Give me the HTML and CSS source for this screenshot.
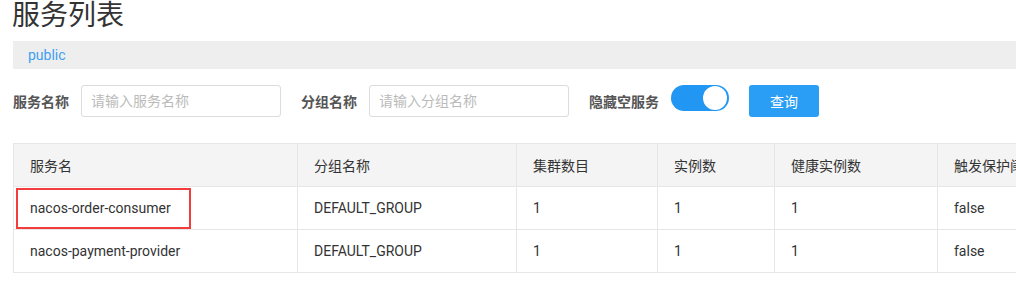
FILE: index.html
```html
<!DOCTYPE html>
<html lang="zh-CN">
<head>
    <meta charset="UTF-8">
    <title>服务列表</title>
    <link rel="stylesheet" href="styles.css">
</head>
<body>
    <div class="page">
        <h1 class="title">服务列表</h1>
        <div class="crumb"><span class="ns">public</span></div>
        <div class="filters">
            <label class="lbl">服务名称</label>
            <input class="txt" type="text" placeholder="请输入服务名称">
            <label class="lbl">分组名称</label>
            <input class="txt" type="text" placeholder="请输入分组名称">
            <label class="lbl">隐藏空服务</label>
            <span class="switch"><span class="knob"></span></span>
            <button class="btn">查询</button>
        </div>
        <table class="grid">
            <thead>
                <tr>
                    <th class="c1">服务名</th>
                    <th class="c2">分组名称</th>
                    <th class="c3">集群数目</th>
                    <th class="c4">实例数</th>
                    <th class="c5">健康实例数</th>
                    <th class="c6">触发保护阈值</th>
                </tr>
            </thead>
            <tbody>
                <tr>
                    <td><span class="mark">nacos-order-consumer</span></td>
                    <td>DEFAULT_GROUP</td>
                    <td>1</td>
                    <td>1</td>
                    <td>1</td>
                    <td>false</td>
                </tr>
                <tr>
                    <td>nacos-payment-provider</td>
                    <td>DEFAULT_GROUP</td>
                    <td>1</td>
                    <td>1</td>
                    <td>1</td>
                    <td>false</td>
                </tr>
            </tbody>
        </table>
    </div>
</body>
</html>
```

FILE: styles.css
```css
html, body { margin: 0; padding: 0; background: #fff; overflow: hidden; }
body { font-family: Roboto, "Noto Sans CJK SC", sans-serif; color: #333; font-size: 14px; }
.page { padding-left: 13px; width: 1200px; }
.title { margin: 0 0 9px -1px; font-size: 28px; font-weight: normal; line-height: 32px; color: #333; }
.crumb { background: #eee; height: 28px; line-height: 28px; padding-left: 15px; }
.ns { color: #3d9ff2; font-size: 14px; }
.filters { display: flex; align-items: center; margin-top: 16px; height: 32px; }
.lbl { font-weight: bold; color: #555; margin-right: 12px; white-space: nowrap; }
.txt { width: 200px; height: 32px; box-sizing: border-box; border: 1px solid #dcdcdc; border-radius: 3px; padding: 0 9px; font-size: 14px; font-family: inherit; margin-right: 20px; outline: none; }
.txt::placeholder { color: #bbb; }
.switch { position: relative; width: 58px; height: 26px; border-radius: 13px; background: #2196f3; margin-right: 20px; margin-top: -6px; }
.knob { position: absolute; right: 2px; top: 1px; width: 24px; height: 24px; border-radius: 50%; background: #fff; }
.btn { width: 70px; height: 32px; border: none; border-radius: 3px; background: #2a9df4; color: #fff; font-size: 14px; font-family: inherit; }
.grid { border-collapse: collapse; margin-top: 26px; width: 1100px; table-layout: fixed; }
.grid th, .grid td { border: 1px solid #e6e6e6; height: 42px; padding: 0 16px; text-align: left; font-weight: normal; white-space: nowrap; overflow: hidden; }
.grid th { background: #f4f4f4; }
.c1 { width: 251px; }
.c2 { width: 186px; }
.c3 { width: 108px; }
.c4 { width: 84px; }
.c5 { width: 130px; }
.mark { position: relative; }
.mark::after { content: ""; position: absolute; left: -14px; right: -20px; top: -12px; bottom: -13px; border: 2px solid #f33c3c; }
```
